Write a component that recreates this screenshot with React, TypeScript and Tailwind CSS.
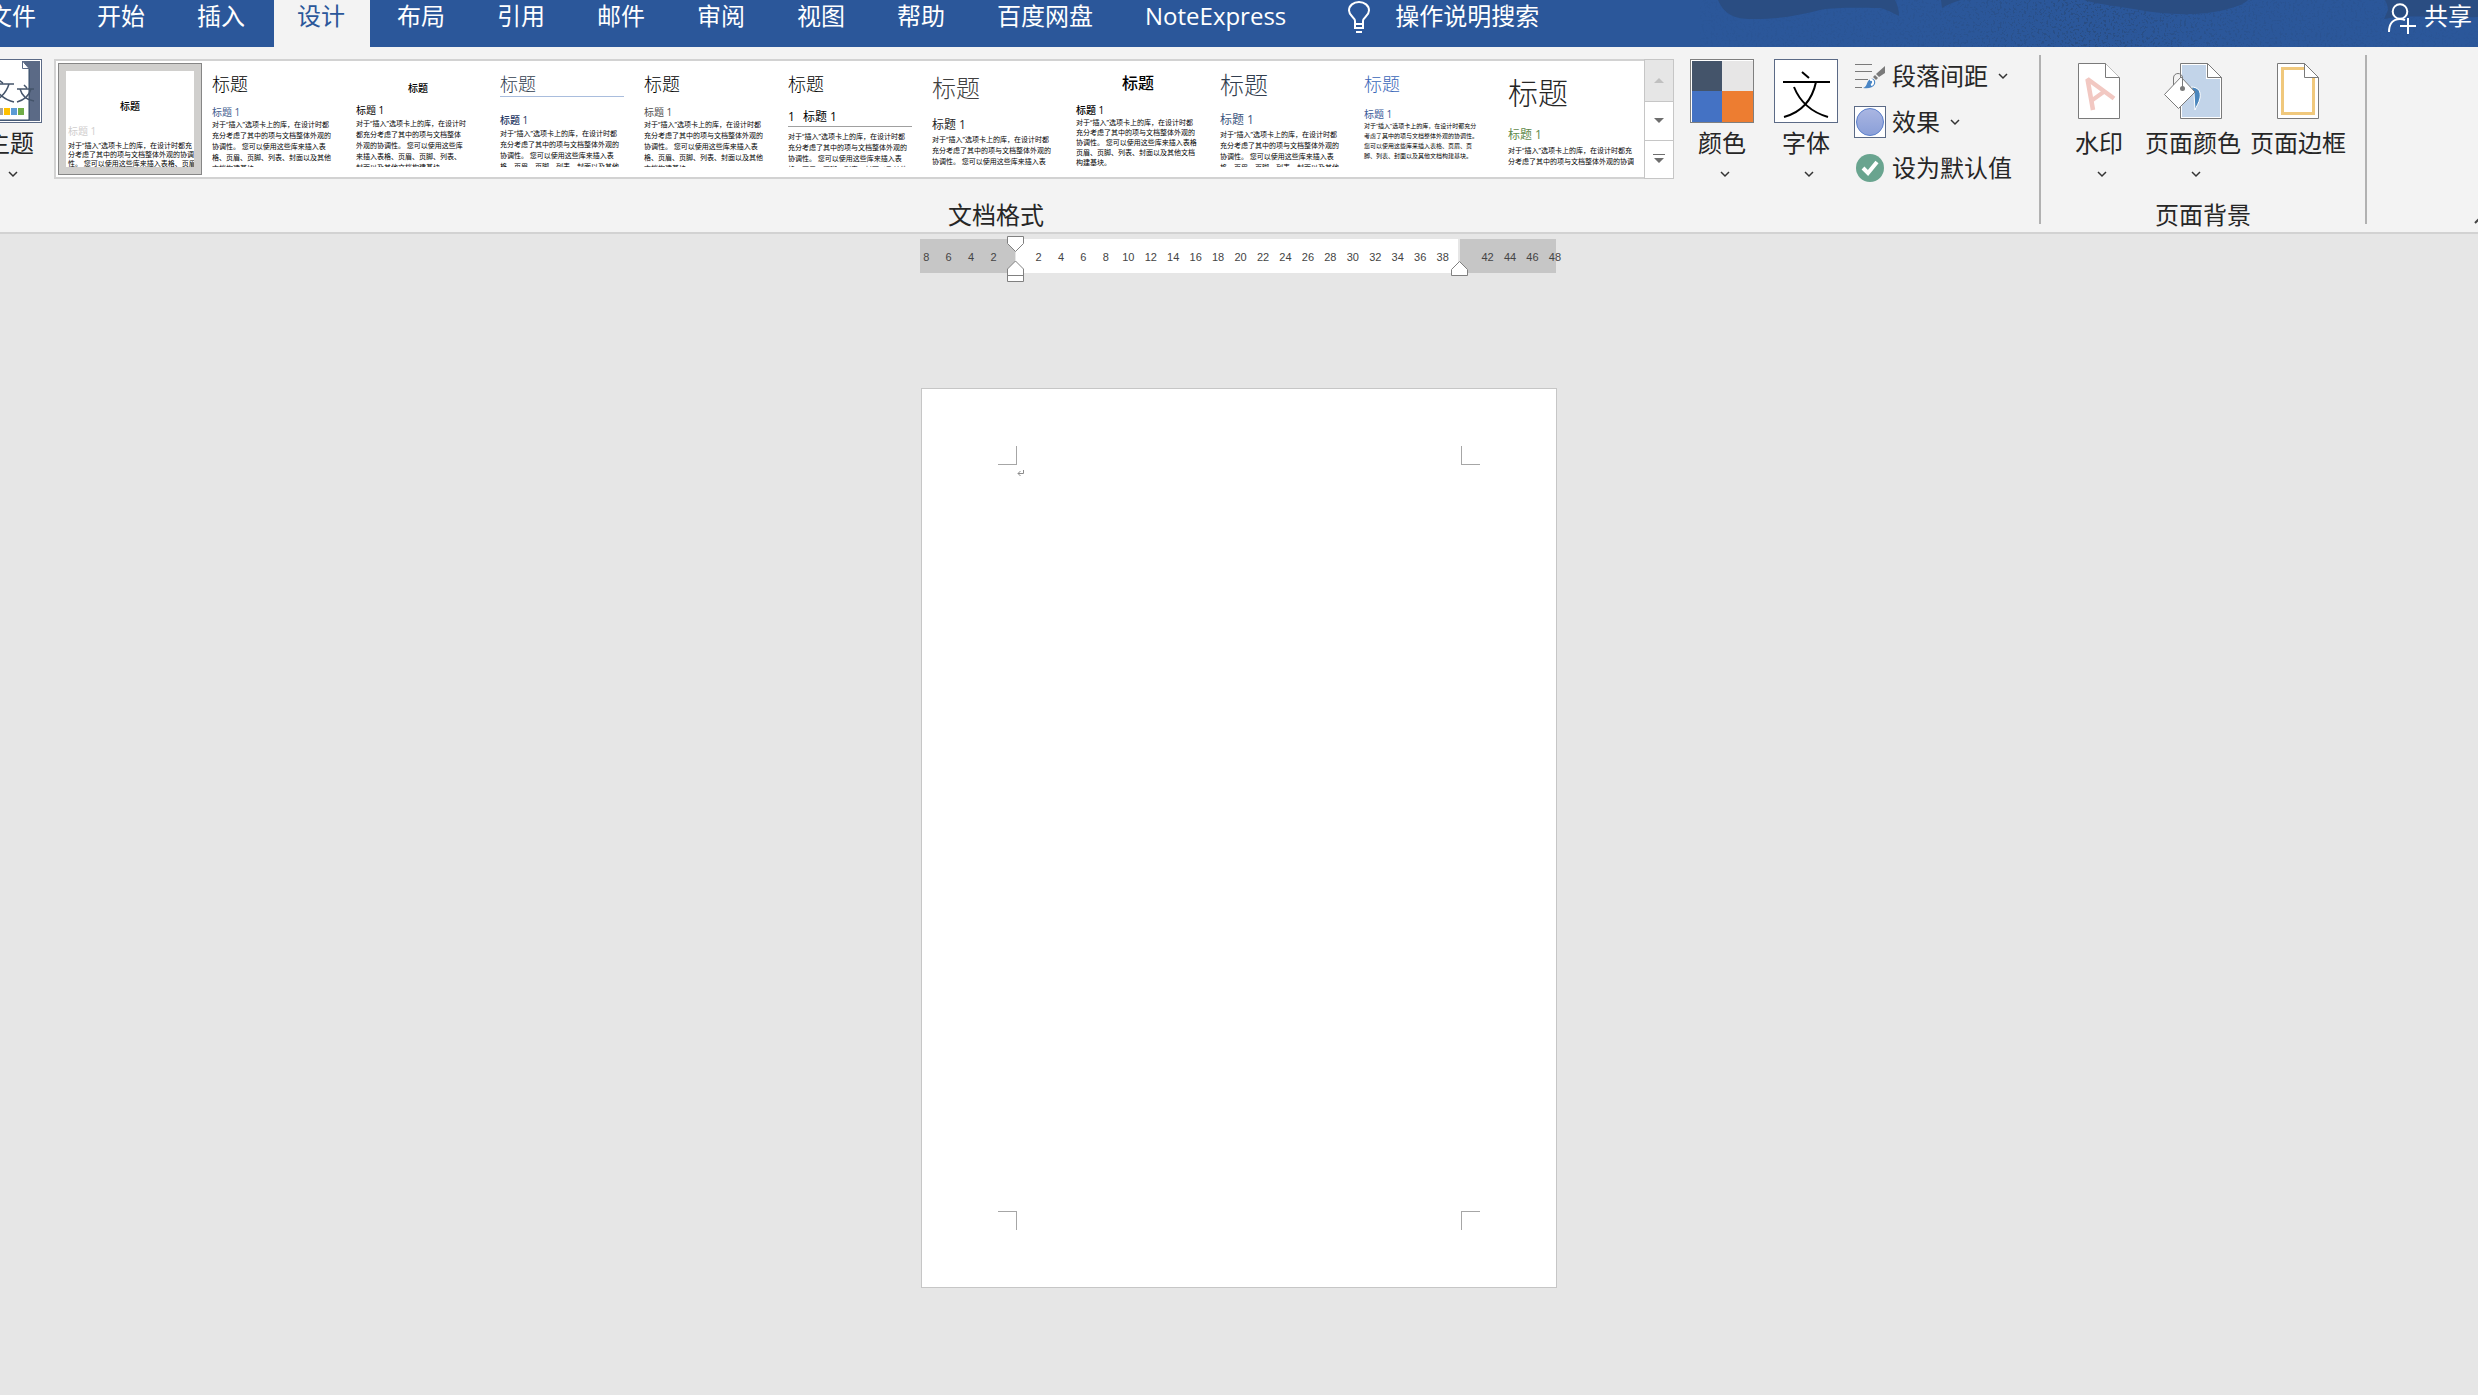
import type { ReactNode } from "react";

const TABS = ["开始", "插入", "设计", "布局", "引用", "邮件", "审阅", "视图", "帮助", "百度网盘", "NoteExpress"];

type Theme = {
  title: string;
  heading: string;
  body: string;
  numbered?: boolean;
  lines: string[];
};

const WIDE = [
  "对于“插入”选项卡上的库，在设计时都",
  "充分考虑了其中的项与文档整体外观的",
  "协调性。 您可以使用这些库来插入表",
  "格、页眉、页脚、列表、封面以及其他",
  "文档构建基块。",
];

const THEMES: Theme[] = [
  {
    title: "mt-[25px] text-center text-[10px] leading-5 font-medium text-black",
    heading: "mt-2 text-[10px] leading-[14px] text-[#d0cece]",
    body: "mt-[3px] text-[7px] leading-[9px]",
    lines: [
      "对于“插入”选项卡上的库，在设计时都充",
      "分考虑了其中的项与文档整体外观的协调",
      "性。 您可以使用这些库来插入表格、页眉、",
    ],
  },
  {
    title: "mt-px text-lg leading-6 font-light text-black",
    heading: "mt-[9px] text-[10px] leading-[14px] text-[#44608f]",
    body: "text-[7px] leading-[11px]",
    lines: WIDE,
  },
  {
    title: "mt-[7px] text-center text-[10px] leading-5 font-medium text-black",
    heading: "mt-[5px] text-[10px] leading-[14px] text-black",
    body: "mt-px text-[7px] leading-[11px]",
    lines: [
      "对于“插入”选项卡上的库，在设计时",
      "都充分考虑了其中的项与文档整体",
      "外观的协调性。 您可以使用这些库",
      "来插入表格、页眉、页脚、列表、",
      "封面以及其他文档构建基块。",
    ],
  },
  {
    title: "mt-px border-b border-[#a9bddd] text-lg leading-6 font-light text-[#323e4f]",
    heading: "mt-4 text-[10px] leading-[14px] font-medium text-[#1f3864]",
    body: "mt-px text-[7px] leading-[11px]",
    lines: WIDE,
  },
  {
    title: "mt-px text-lg leading-6 font-light text-black",
    heading: "mt-[9px] text-[10px] leading-[14px] text-[#505050]",
    body: "text-[7px] leading-[11px]",
    lines: WIDE,
  },
  {
    title: "mt-px text-lg leading-6 font-light text-black",
    heading: "mt-[13px] border-b border-[#a0a0a0] pb-px text-xs leading-4 text-black",
    body: "mt-1 text-[7px] leading-[11px]",
    numbered: true,
    lines: WIDE,
  },
  {
    title: "mt-px text-2xl leading-8 font-light text-[#404040]",
    heading: "mt-[13px] text-xs leading-4 text-[#262626]",
    body: "mt-px text-[7px] leading-[11px]",
    lines: WIDE.slice(0, 3),
  },
  {
    title: "text-center text-base leading-6 font-medium text-black",
    heading: "mt-2 text-[10px] leading-[14px] font-medium text-black",
    body: "mt-px text-[7px] leading-[10px]",
    lines: [
      "对于“插入”选项卡上的库，在设计时都",
      "充分考虑了其中的项与文档整体外观的",
      "协调性。 您可以使用这些库来插入表格",
      "页眉、页脚、列表、封面以及其他文档",
      "构建基块。",
    ],
  },
  {
    title: "text-2xl leading-7 font-light text-[#323e4f]",
    heading: "mt-[13px] text-xs leading-4 text-[#3d5680]",
    body: "mt-px text-[7px] leading-[11px]",
    lines: WIDE,
  },
  {
    title: "mt-px text-lg leading-6 font-light text-[#3a66b8]",
    heading: "mt-[11px] text-[10px] leading-[14px] text-[#3a5a98]",
    body: "text-[6px] leading-[10px]",
    lines: [
      "对于“插入”选项卡上的库，在设计时都充分",
      "考虑了其中的项与文档整体外观的协调性。",
      "您可以使用这些库来插入表格、页眉、页",
      "脚、列表、封面以及其他文档构建基块。",
    ],
  },
  {
    title: "mt-0.5 text-3xl leading-10 font-light text-[#262626]",
    heading: "mt-3.5 text-xs leading-4 text-[#5f8a4a]",
    body: "mt-0.5 text-[7px] leading-[11px]",
    lines: ["对于“插入”选项卡上的库，在设计时都充", "分考虑了其中的项与文档整体外观的协调"],
  },
];

const RULER = [
  "8", "6", "4", "2", "", "2", "4", "6", "8", "10", "12", "14", "16", "18", "20", "22", "24", "26",
  "28", "30", "32", "34", "36", "38", "", "42", "44", "46", "48",
];

function Chevron({ className }: { className?: string }) {
  return (
    <svg className={className} width="10" height="8" viewBox="0 0 10 8" fill="none" stroke="#333" strokeWidth="1.500" aria-hidden="true">
      <path d="M1 2l4 4 4-4" />
    </svg>
  );
}

function BannerArt() {
  return (
    <svg className="absolute top-0 right-0" width="778" height="47" viewBox="0 0 778 47" aria-hidden="true">
      <defs>
        <filter id="speckle" x="0" y="0" width="100%" height="100%" colorInterpolationFilters="sRGB">
          <feTurbulence type="fractalNoise" baseFrequency="0.45" numOctaves="2" seed="4" />
          <feColorMatrix values="0 0 0 0 0.16  0 0 0 0 0.3  0 0 0 0 0.5  0 0 0 9 -5" />
        </filter>
        <linearGradient id="fade" x1="0" x2="1" y1="0" y2="0">
          <stop offset="0" stopColor="#fff" stopOpacity="0.1" />
          <stop offset="0.3" stopColor="#fff" stopOpacity="0.25" />
          <stop offset="0.5" stopColor="#fff" stopOpacity="0.9" />
          <stop offset="0.72" stopColor="#fff" stopOpacity="0.3" />
          <stop offset="1" stopColor="#fff" stopOpacity="0.1" />
        </linearGradient>
        <mask id="fade-mask">
          <rect width="778" height="47" fill="url(#fade)" />
        </mask>
      </defs>
      <g mask="url(#fade-mask)">
        <rect width="778" height="47" filter="url(#speckle)" />
      </g>
      <g fill="#2a4d82">
        <path d="M18 0C24 14 34 19 52 19C82 19 100 15 120 10C136 7 160 8 180 8C186 9 193 13 199 16C199 9 197 4 195 0Z" />
        <path d="M241 0H261C253 2 247 5 242 8Z" />
        <path d="M384 0C400 5 424 7 440 10C466 15 500 16 524 10C536 7 544 4 548 0Z" />
        <path d="M685 0C687 4 688 7 688 10L684 19C706 14 744 18 778 17V0Z" />
      </g>
    </svg>
  );
}

function BulbIcon() {
  return (
    <svg width="24" height="34" viewBox="0 0 24 34" fill="none" stroke="#fff" strokeWidth="2" aria-hidden="true">
      <path d="M8 24V21C8 17 2 16 2 10.500C2 5.500 6.500 2 12 2S22 5.500 22 10.500C22 16 16 17 16 21V24" />
      <path d="M7 24H17M7 28H17M9 32H15" />
      <path d="M8 23V29M16 23V29" />
    </svg>
  );
}

function ShareIcon() {
  return (
    <svg width="28" height="32" viewBox="0 0 28 32" fill="none" stroke="#fff" strokeWidth="2" aria-hidden="true">
      <circle cx="12" cy="8.500" r="7.300" />
      <path d="M1 29C1 21 5 16 12 16C14 16 16 16.500 17 17" />
      <path d="M20 15V31M12 23H28" />
    </svg>
  );
}

function ThemeIcon() {
  return (
    <svg width="64" height="64" viewBox="0 0 64 64" aria-hidden="true">
      <rect x="0.500" y="0.500" width="63" height="63" fill="#fff" stroke="#5b6a86" />
      <rect x="2" y="2" width="60" height="60" fill="#5b6a86" />
      <path d="M2 2H44L51 10V61H2Z" fill="#fff" />
      <path d="M51 10V61H4" fill="none" stroke="#2f4763" />
      <path d="M44.500 2V9.500H51Z" fill="#fff" stroke="#5b6a86" />
      <g fill="none" stroke="#44546a" strokeWidth="1.500">
        <path d="M19 20L25 24M11 25H36M15 25C18 34 27 41 36 43M31 25C28 35 20 42 11 44" />
        <path d="M46 26L49 29M39 30H56M42 30C44 37 49 41 56 42M53 30C51 37 46 41 39 43" />
      </g>
      <path d="M19 49h6v7h-6z" fill="#a5a5a5" />
      <path d="M26 49h6v7h-6z" fill="#ffc000" />
      <path d="M33 49h6v7h-6z" fill="#5b9bd5" />
      <path d="M40 49h6v7h-6z" fill="#70ad47" />
    </svg>
  );
}

function ColorsIcon() {
  return (
    <svg width="64" height="64" viewBox="0 0 64 64" aria-hidden="true">
      <rect x="0.500" y="0.500" width="63" height="63" fill="#fff" stroke="#7f7f7f" />
      <path d="M2 2h30v30H2z" fill="#44546a" />
      <path d="M32 2h31v30H32z" fill="#e7e6e6" />
      <path d="M2 32h30v31H2z" fill="#4472c4" />
      <path d="M32 32h31v31H32z" fill="#ed7d31" />
    </svg>
  );
}

function FontsIcon() {
  return (
    <svg width="64" height="64" viewBox="0 0 64 64" fill="none" aria-hidden="true">
      <rect x="0.500" y="0.500" width="63" height="63" fill="#fff" stroke="#5b6a86" />
      <g stroke="#000" strokeWidth="2">
        <path d="M28 13L35 19M9 23H56" />
        <path d="M42 23C38 42 28 53 10 58" />
        <path d="M20 28C26 43 37 53 54 58" />
      </g>
    </svg>
  );
}

function SpacingIcon() {
  return (
    <svg width="32" height="32" viewBox="0 0 32 32" fill="none" aria-hidden="true">
      <path d="M1 4.500H18M1 11.500H18M1 19.500H14M1 27.500H8" stroke="#7a7a7a" />
      <path d="M31 6V13L25 17L22 14Z" fill="#7a7a7a" />
      <path d="M21 15L24 18L22 20L19 17Z" fill="#7a7a7a" />
      <path d="M9 28C14 27 12 20 17 19C20 18 22 21 21 24C19 28 14 29 9 28Z" fill="#4a86c5" />
      <path d="M16 20C20 19 20 24 17 25" stroke="#fff" strokeWidth="2" />
    </svg>
  );
}

function EffectsIcon() {
  return (
    <svg width="32" height="32" viewBox="0 0 32 32" aria-hidden="true">
      <defs>
        <linearGradient id="orb" x1="0" x2="0" y1="0" y2="1">
          <stop offset="0" stopColor="#aab6e2" />
          <stop offset="1" stopColor="#8a9fd8" />
        </linearGradient>
      </defs>
      <rect x="0.500" y="0.500" width="31" height="31" fill="#fff" stroke="#5b6a86" />
      <circle cx="16" cy="16" r="13.500" fill="url(#orb)" stroke="#5b80cc" />
    </svg>
  );
}

function DefaultIcon() {
  return (
    <svg width="32" height="32" viewBox="0 0 32 32" aria-hidden="true">
      <circle cx="16" cy="16" r="14" fill="#69a48f" />
      <path d="M9 16L14 21L23 10" fill="none" stroke="#fff" strokeWidth="4" />
    </svg>
  );
}

function WatermarkIcon() {
  return (
    <svg width="42" height="56" viewBox="0 0 42 56" aria-hidden="true">
      <path d="M0.500 0.500H27.500L41.500 14.500V55.500H0.500Z" fill="#fff" stroke="#7a7a7a" />
      <path d="M15 47L9.500 16L36 35.500" fill="none" stroke="#f2c8c2" strokeWidth="4.500" strokeLinejoin="bevel" />
      <path d="M13 38L27 28" stroke="#f2c8c2" strokeWidth="4" />
      <path d="M27.500 0.500V14.500H41.500" fill="#fff" stroke="#7a7a7a" />
    </svg>
  );
}

function PageColorIcon() {
  return (
    <svg width="58" height="56" viewBox="0 0 58 56" aria-hidden="true">
      <path d="M16.500 0.500H43.500L57.500 14.500V55.500H16.500Z" fill="#fff" stroke="#7a7a7a" />
      <path d="M18 2H42V16H56V54H18Z" fill="#c2d4e9" />
      <path d="M43.500 0.500V14.500H57.500Z" fill="#fff" stroke="#7a7a7a" />
      <path d="M27 24C35 24 37 29 36 35C35 40 32 44 31 47L30 30Z" fill="#4a86bd" stroke="#fff" />
      <path d="M17 14L31 29L14.500 45.500L0.500 31.500Z" fill="#fff" stroke="#7a7a7a" />
      <path d="M9.500 22V15C9.500 9 18.500 9 18.500 15V24" fill="none" stroke="#7a7a7a" />
      <circle cx="18.500" cy="25.500" r="2.500" fill="#7a7a7a" />
    </svg>
  );
}

function PageBorderIcon() {
  return (
    <svg width="42" height="56" viewBox="0 0 42 56" aria-hidden="true">
      <path d="M0.500 0.500H27.500L41.500 14.500V55.500H0.500Z" fill="#fff" stroke="#7a7a7a" />
      <path d="M27 5.500H5.500V50.500H36.500V14" fill="none" stroke="#f0c87c" strokeWidth="3" />
      <path d="M27.500 0.500V14.500H41.500Z" fill="#fff" stroke="#7a7a7a" />
    </svg>
  );
}

function BigButton({ icon, label, menu = true }: { icon: ReactNode; label: string; menu?: boolean }) {
  return (
    <button type="button" className="flex shrink-0 flex-col items-center">
      <span className="flex h-16 items-center">{icon}</span>
      <span className="mt-1 leading-8 whitespace-nowrap">{label}</span>
      {menu && <Chevron className="mt-[11px] ml-1.5" />}
    </button>
  );
}

function SmallButton({ icon, label, menu = false }: { icon: ReactNode; label: string; menu?: boolean }) {
  return (
    <button type="button" className="flex h-[46px] items-center">
      {icon}
      <span className="ml-1.5 leading-8 whitespace-nowrap">{label}</span>
      {menu && <Chevron className="ml-2.5" />}
    </button>
  );
}

function ThemeCard({ theme, selected }: { theme: Theme; selected: boolean }) {
  return (
    <button
      type="button"
      aria-pressed={selected}
      className={
        selected
          ? "flex h-28 w-36 shrink-0 border border-[#868686] bg-[#d0cfcd] p-[7px]"
          : "flex h-28 w-36 shrink-0 border border-transparent p-[7px]"
      }
    >
      <span className="flex h-24 w-32 flex-col overflow-hidden bg-white px-0.5 text-left whitespace-nowrap">
        <span className={`shrink-0 ${theme.title}`}>标题</span>
        <span className={`shrink-0 ${theme.heading}`}>
          {theme.numbered && <span className="mr-2">1</span>}标题 1
        </span>
        <span className={`shrink-0 text-black ${theme.body}`}>
          {theme.lines.map((line) => (
            <span key={line} className="block">
              {line}
            </span>
          ))}
        </span>
      </span>
    </button>
  );
}

function GroupLabel({ children }: { children: ReactNode }) {
  return <h2 className="text-center leading-8">{children}</h2>;
}

function Gallery() {
  return (
    <div className="flex h-[120px] min-w-0 flex-1">
      <div className="flex min-w-0 flex-1 overflow-hidden border-y-2 border-l-2 border-[#d2d2d2] bg-white p-0.5">
        {THEMES.map((theme, index) => (
          <ThemeCard key={index} theme={theme} selected={index === 0} />
        ))}
      </div>
      <div className="flex w-[30px] shrink-0 flex-col divide-y divide-[#c6c6c6] border border-[#c6c6c6] bg-white">
        <button type="button" aria-label="上一行" disabled className="flex h-[42px] items-center justify-center bg-[#e6e6e6]">
          <svg width="10" height="5" viewBox="0 0 10 5" fill="#c0c0c0"><path d="M0 5L5 0L10 5Z" /></svg>
        </button>
        <button type="button" aria-label="下一行" className="flex flex-1 items-center justify-center">
          <svg width="10" height="5" viewBox="0 0 10 5" fill="#6e6e6e"><path d="M0 0L5 5L10 0Z" /></svg>
        </button>
        <button type="button" aria-label="其他" className="flex flex-1 items-center justify-center">
          <svg width="12" height="10" viewBox="0 0 12 10" fill="#6e6e6e"><path d="M0 0H12V1H0ZM1 4L6 9L11 4Z" /></svg>
        </button>
      </div>
    </div>
  );
}

function Ribbon() {
  return (
    <div className="flex border-b-2 border-[#d2d2d2] bg-[#f3f3f3] text-2xl text-[#262626]">
      <section className="-ml-[47px] flex min-w-0 flex-1 flex-col pt-3 pb-px">
        <div className="flex h-[140px] items-start pl-[25px]">
          <BigButton icon={<ThemeIcon />} label="主题" />
          <div className="flex min-w-0 flex-1 pl-3">
            <Gallery />
          </div>
          <div className="flex gap-5 pl-4">
            <BigButton icon={<ColorsIcon />} label="颜色" />
            <BigButton icon={<FontsIcon />} label="字体" />
          </div>
          <div className="-mt-1.5 flex w-[201px] shrink-0 flex-col pl-4">
            <SmallButton icon={<SpacingIcon />} label="段落间距" menu />
            <SmallButton icon={<EffectsIcon />} label="效果" menu />
            <SmallButton icon={<DefaultIcon />} label="设为默认值" />
          </div>
        </div>
        <GroupLabel>文档格式</GroupLabel>
      </section>
      <div className="my-2 w-0.5 shrink-0 bg-[#b1b1b1]" />
      <section className="flex w-[324px] shrink-0 flex-col pt-3 pb-px">
        <div className="flex h-[140px] items-start pl-[34px]">
          <BigButton icon={<WatermarkIcon />} label="水印" />
          <div className="flex gap-[9px] pl-[22px]">
            <BigButton icon={<PageColorIcon />} label="页面颜色" />
            <BigButton icon={<PageBorderIcon />} label="页面边框" menu={false} />
          </div>
        </div>
        <GroupLabel>页面背景</GroupLabel>
      </section>
      <div className="my-2 w-0.5 shrink-0 bg-[#b1b1b1]" />
      <div className="flex w-[111px] shrink-0 items-end justify-end overflow-hidden pb-2">
        <button type="button" aria-label="折叠功能区" className="-mr-2">
          <svg className="block" width="12" height="8" viewBox="0 0 12 8" fill="none" stroke="#444" strokeWidth="2">
            <path d="M1 7L6 2L11 7" />
          </svg>
        </button>
      </div>
    </div>
  );
}

function Header() {
  return (
    <header className="relative flex items-start overflow-hidden bg-[#2b579a] text-2xl text-white">
      <BannerArt />
      <nav className="relative flex shrink-0 gap-1">
        <button type="button" className="-ml-3 pr-[34px] pb-[15px] leading-8 whitespace-nowrap">
          文件
        </button>
        {TABS.map((tab) => (
          <button
            key={tab}
            type="button"
            aria-current={tab === "设计" ? "page" : undefined}
            className={
              tab === "设计"
                ? "bg-[#f3f3f3] pr-[25px] pb-[15px] pl-[23px] leading-8 whitespace-nowrap text-[#2b579a]"
                : "pr-[25px] pb-[15px] pl-[23px] leading-8 whitespace-nowrap"
            }
          >
            {tab}
          </button>
        ))}
      </nav>
      <label className="relative flex min-w-0 flex-1 items-start pl-9">
        <BulbIcon />
        <input
          type="text"
          aria-label="操作说明搜索"
          placeholder="操作说明搜索"
          className="ml-6 h-8 w-48 bg-transparent leading-8 outline-none placeholder:text-white placeholder:opacity-100"
        />
      </label>
      <button type="button" className="relative flex shrink-0 items-start gap-2 pr-1.5 leading-8">
        <span className="pt-[3px]">
          <ShareIcon />
        </span>
        共享
      </button>
    </header>
  );
}

function Ruler() {
  return (
    <div className="mx-auto w-[638px] pr-0.5">
      <div className="relative flex h-[34px]">
        <div className="w-[95px] bg-[#c6c6c6]" />
        <div className="ml-px flex-1 bg-white" />
        <div className="ml-0.5 w-24 bg-[#c6c6c6]" />
        <div className="absolute inset-y-0 -right-2.5 -left-[5px] flex items-center pt-0.5 font-['Liberation_Sans'] text-[11px] text-[#444]">
          {RULER.map((mark, index) => (
            <span key={index} className="flex-1 text-center">
              {mark}
            </span>
          ))}
        </div>
        <svg className="absolute -top-[3px] left-[87px]" width="17" height="46" viewBox="0 0 17 46" fill="#fff" stroke="#808080" aria-hidden="true">
          <path d="M0.500 0.500H16.500V7.500L8.500 15.500L0.500 7.500Z" />
          <path d="M8.500 25L16.500 33V45.500H0.500V33Z" />
          <path d="M0.500 39.500H16.500" />
        </svg>
        <svg className="absolute top-[22px] right-[88px]" width="17" height="15" viewBox="0 0 17 15" fill="#fff" stroke="#808080" aria-hidden="true">
          <path d="M8.500 0.500L16.500 8.500V14.500H0.500V8.500Z" />
        </svg>
      </div>
    </div>
  );
}

function Paper() {
  return (
    <article className="mx-auto mt-[115px] flex h-[900px] w-[636px] flex-col border border-[#c6c6c6] bg-white px-[76px] py-[57px]">
      <div className="flex justify-between">
        <span className="size-[19px] border-r border-b border-[#a6a6a6]" />
        <span className="size-[19px] border-b border-l border-[#a6a6a6]" />
      </div>
      <div className="flex-1 px-[19px] pt-1">
        <svg width="8" height="8" viewBox="0 0 8 8" fill="none" stroke="#8c8c8c" aria-hidden="true">
          <path d="M6.500 1V4.500H1M3.500 2L1 4.500L3.500 7" />
        </svg>
      </div>
      <div className="flex justify-between">
        <span className="size-[19px] border-t border-r border-[#a6a6a6]" />
        <span className="size-[19px] border-t border-l border-[#a6a6a6]" />
      </div>
    </article>
  );
}

export default function App() {
  return (
    <div className="flex min-h-screen flex-col overflow-hidden bg-[#e6e6e6] font-['Open_Sans','Noto_Sans_CJK_SC',sans-serif]">
      <Header />
      <Ribbon />
      <main className="flex-1 pt-[5px]">
        <Ruler />
        <Paper />
      </main>
    </div>
  );
}
